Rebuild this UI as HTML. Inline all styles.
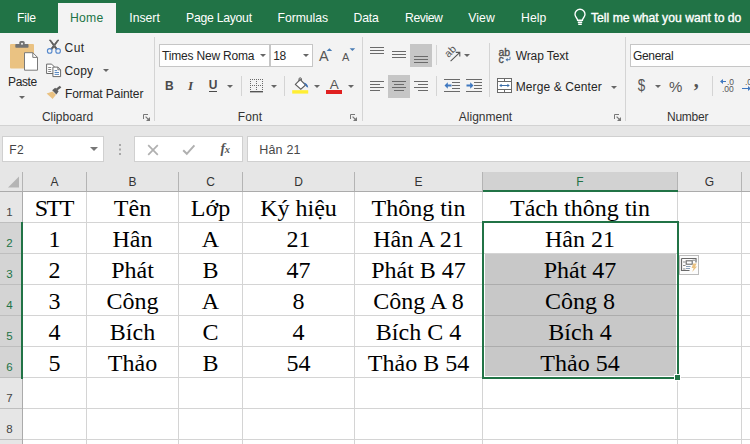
<!DOCTYPE html>
<html><head><meta charset="utf-8">
<style>
html,body{margin:0;padding:0;}
body{width:750px;height:444px;overflow:hidden;position:relative;background:#e6e6e6;font-family:"Liberation Sans",sans-serif;font-size:12px;color:#262626;}
.abs{position:absolute;}
svg{position:absolute;overflow:visible;}
.t{position:absolute;white-space:nowrap;line-height:14px;font-size:11.5px;color:#262626;}
#tabs{left:0;top:0;width:750px;height:33px;background:#217346;}
#home{left:58px;top:3px;width:58px;height:30px;background:#f3f3f3;}
#ribbon{left:0;top:33px;width:750px;height:92px;background:#f3f3f3;border-bottom:1px solid #d2d2d2;}
.sep{position:absolute;width:1px;background:#d4d4d4;}
.box{position:absolute;background:#fff;border:1px solid #c6c6c6;box-sizing:border-box;}
.sel{position:absolute;background:#c6c6c6;}
.arr{position:absolute;width:0;height:0;border-left:3px solid transparent;border-right:3px solid transparent;border-top:3px solid #666;}
#grid{left:23px;top:192px;width:727px;height:253px;background:#fff;}
.cell{position:absolute;font-family:"Liberation Serif",serif;font-size:24px;line-height:31px;height:31px;text-align:center;color:#000;white-space:nowrap;}
.vl{position:absolute;width:1px;background:#d4d4d4;}
.hl{position:absolute;height:1px;background:#d4d4d4;}
.ch{position:absolute;top:173px;height:19px;line-height:19px;text-align:center;font-size:12px;color:#333;}
.rh{position:absolute;left:0;width:19px;text-align:center;font-size:11.5px;color:#444;line-height:14px;height:14px;}
</style></head><body>
<div id="tabs" class="abs"><div id="home" class="abs"></div></div>
<div id="ribbon" class="abs"></div>
<div class="sep" style="left:154px;top:37px;height:84px"></div>
<div class="sep" style="left:362px;top:37px;height:84px"></div>
<div class="sep" style="left:625px;top:37px;height:84px"></div>
<div class="box" style="left:159px;top:44px;width:111px;height:23px"></div>
<div class="box" style="left:270px;top:44px;width:43px;height:23px"></div>
<div class="box" style="left:630px;top:44px;width:130px;height:23px"></div>
<div class="sel" style="left:410px;top:44px;width:22px;height:23px"></div>
<div class="sel" style="left:388px;top:75px;width:22px;height:23px"></div>
<div class="sep" style="left:241px;top:76px;height:20px"></div>
<div class="sep" style="left:284px;top:76px;height:20px"></div>
<div class="sep" style="left:436px;top:45px;height:20px"></div>
<div class="sep" style="left:436px;top:76px;height:20px"></div>
<div class="sep" style="left:489px;top:43px;height:54px"></div>
<div class="sep" style="left:712px;top:76px;height:20px"></div>
<div class="box" style="left:2px;top:136px;width:102px;height:26px;border-color:#d0d0d0"></div>
<div class="box" style="left:134px;top:136px;width:109px;height:26px;border-color:#d0d0d0"></div>
<div class="box" style="left:247px;top:136px;width:510px;height:26px;border-color:#d0d0d0"></div>
<div id="grid" class="abs"></div>

<div id="texts">
<span class="t" style="left:17.0px;top:10.9px;font-size:12.2px;color:#fff;letter-spacing:-0.22px;">File</span>
<span class="t" style="left:70.0px;top:10.9px;font-size:12.2px;color:#217346;letter-spacing:0.24px;">Home</span>
<span class="t" style="left:129.3px;top:10.9px;font-size:12.2px;color:#fff;letter-spacing:-0.00px;">Insert</span>
<span class="t" style="left:186.0px;top:10.9px;font-size:12.2px;color:#fff;letter-spacing:-0.24px;">Page Layout</span>
<span class="t" style="left:277.6px;top:10.9px;font-size:12.2px;color:#fff;letter-spacing:-0.04px;">Formulas</span>
<span class="t" style="left:353.6px;top:10.9px;font-size:12.2px;color:#fff;letter-spacing:-0.22px;">Data</span>
<span class="t" style="left:405.0px;top:10.9px;font-size:12.2px;color:#fff;letter-spacing:-0.42px;">Review</span>
<span class="t" style="left:468.3px;top:10.9px;font-size:12.2px;color:#fff;letter-spacing:0.07px;">View</span>
<span class="t" style="left:521.0px;top:10.9px;font-size:12.2px;color:#fff;letter-spacing:0.10px;">Help</span>
<span class="t" style="left:591.0px;top:10.9px;font-size:12.2px;color:#fff;letter-spacing:0.00px;-webkit-text-stroke:0.35px #fff;">Tell me what you want to do</span>
<span class="t" style="left:8.1px;top:74.8px;font-size:12px;color:#262626;letter-spacing:-0.41px;">Paste</span>
<span class="t" style="left:64.5px;top:41.3px;font-size:12px;color:#262626;letter-spacing:0.48px;">Cut</span>
<span class="t" style="left:64.5px;top:64.4px;font-size:12px;color:#262626;letter-spacing:0.16px;">Copy</span>
<span class="t" style="left:65.0px;top:87.1px;font-size:12px;color:#262626;letter-spacing:-0.07px;">Format Painter</span>
<span class="t" style="left:41.9px;top:110.0px;font-size:12px;color:#333;letter-spacing:-0.01px;">Clipboard</span>
<span class="t" style="left:162.1px;top:49.3px;font-size:12px;color:#262626;letter-spacing:-0.19px;">Times New Roma</span>
<span class="t" style="left:273.3px;top:49.3px;font-size:12px;color:#262626;letter-spacing:-0.36px;">18</span>
<span class="t" style="left:237.7px;top:109.7px;font-size:12px;color:#333;letter-spacing:0.11px;">Font</span>
<span class="t" style="left:515.7px;top:49.1px;font-size:12px;color:#262626;letter-spacing:-0.10px;">Wrap Text</span>
<span class="t" style="left:515.7px;top:79.9px;font-size:12px;color:#262626;letter-spacing:0.10px;">Merge &amp; Center</span>
<span class="t" style="left:458.8px;top:109.7px;font-size:12px;color:#333;letter-spacing:-0.00px;">Alignment</span>
<span class="t" style="left:633.1px;top:48.9px;font-size:12px;color:#262626;letter-spacing:-0.37px;">General</span>
<span class="t" style="left:667.0px;top:109.5px;font-size:12px;color:#333;letter-spacing:-0.26px;">Number</span>
<span class="t" style="left:9.3px;top:143.2px;font-size:12px;color:#444;letter-spacing:0.31px;">F2</span>
<span class="t" style="left:259.2px;top:143.1px;font-size:12.5px;color:#484848;letter-spacing:0.20px;">Hân 21</span>
</div>
<div id="icons">
<!-- paste -->
<svg style="left:4px;top:36px" width="40" height="40" viewBox="0 0 40 40">
<rect x="6" y="8" width="24" height="24.5" rx="1" fill="#eac282"/>
<rect x="11.3" y="8" width="13.2" height="3.8" rx="0.8" fill="#737373"/>
<rect x="15.3" y="5" width="5.4" height="5" rx="1.6" fill="#737373"/>
<circle cx="18" cy="7.7" r="1" fill="#f3f3f3"/>
<path d="M20.5 16.7h8.3l4.7 4.7v12.8h-13z" fill="#fff" stroke="#7a7a7a" stroke-width="1"/>
<path d="M28.8 16.7v4.7h4.7" fill="none" stroke="#7a7a7a" stroke-width="1"/>
</svg>
<div class="arr" style="left:18.5px;top:96px"></div>
<!-- scissors -->
<svg style="left:44px;top:38px" width="20" height="18" viewBox="0 0 20 18">
<path d="M5.4 2L6.6 2L13.4 10.8L12 11.4zM14.8 2L13.6 2L6.8 10.8L8.200 11.4z" fill="#5a5a5a" stroke="#5a5a5a" stroke-width="0.8" stroke-linejoin="round"/>
<circle cx="5.7" cy="12.9" r="2.3" fill="none" stroke="#5588cc" stroke-width="1.1"/>
<circle cx="14.1" cy="12.9" r="2.3" fill="none" stroke="#5588cc" stroke-width="1.1"/>
</svg>
<!-- copy -->
<svg style="left:44px;top:61px" width="20" height="18" viewBox="0 0 20 18">
<path d="M2.6 3.1h5l2.4 2.4v7h-7.4z" fill="#fff" stroke="#6a6a6a" stroke-width="1"/>
<path d="M4.2 6.5h3M4.2 8.5h3M4.2 10.5h3" stroke="#7a7a7a" stroke-width="0.9"/>
<path d="M8.9 6.1h5l2.7 2.7v6.8h-7.7z" fill="#fff" stroke="#6a6a6a" stroke-width="1"/>
<path d="M13.9 6.1v2.7h2.7" fill="none" stroke="#6a6a6a" stroke-width="0.9"/>
<path d="M10.6 9.6h2.5M10.6 11.5h4.4M10.6 13.4h4.4" stroke="#4a7ebb" stroke-width="0.9"/>
</svg>
<div class="arr" style="left:102.5px;top:69px"></div>
<!-- format painter -->
<svg style="left:44px;top:84px" width="20" height="18" viewBox="0 0 20 18">
<path d="M2.6 9.6L8.6 7.4L12 10.8L8.6 14.9L6.8 13.2z" fill="#eac282"/>
<path d="M8.2 6.2L11.2 3.8L14.6 7.2L12.4 10.4z" fill="#5e5e5e"/>
<path d="M12.6 5.6L16.6 2.6" stroke="#5e5e5e" stroke-width="2.4" stroke-linecap="butt"/>
</svg>
<!-- launchers -->
<svg style="left:143px;top:114px" width="8" height="8" viewBox="0 0 8 8"><path d="M0.5 5V0.5H5" fill="none" stroke="#777" stroke-width="1"/><path d="M2.6 2.6L6 6" stroke="#777" stroke-width="1.1"/><path d="M7 3v4h-4z" fill="#777"/></svg>
<svg style="left:350px;top:114px" width="8" height="8" viewBox="0 0 8 8"><path d="M0.5 5V0.5H5" fill="none" stroke="#777" stroke-width="1"/><path d="M2.6 2.6L6 6" stroke="#777" stroke-width="1.1"/><path d="M7 3v4h-4z" fill="#777"/></svg>
<svg style="left:614px;top:114px" width="8" height="8" viewBox="0 0 8 8"><path d="M0.5 5V0.5H5" fill="none" stroke="#777" stroke-width="1"/><path d="M2.6 2.6L6 6" stroke="#777" stroke-width="1.1"/><path d="M7 3v4h-4z" fill="#777"/></svg>
<!-- font group -->
<div class="arr" style="left:259.5px;top:54px"></div>
<div class="arr" style="left:302.5px;top:54px"></div>
<span class="t" style="left:319px;top:48px;font-size:14.5px;line-height:16px;color:#555">A</span>
<svg style="left:326px;top:46px" width="7" height="5"><path d="M0.6 4.9L3.4 2.2L6.2 4.9z" fill="#4a7db5"/></svg>
<span class="t" style="left:342px;top:50px;font-size:11px;line-height:14px;color:#555">A</span>
<svg style="left:348.5px;top:46px" width="7" height="5"><path d="M0.6 2.3L3.4 5L6.2 2.3z" fill="#4a7db5"/></svg>
<span class="t" style="left:165px;top:79px;font-size:12px;font-weight:bold;color:#4a4a4a">B</span>
<span class="t" style="left:188px;top:77.9px;font-size:13px;line-height:15px;font-style:italic;font-family:'Liberation Serif',serif;font-weight:bold;color:#4a4a4a">I</span>
<span class="t" style="left:208.8px;top:79.3px;font-size:12px;font-weight:bold;color:#4a4a4a;line-height:13px;height:12px;border-bottom:1.3px solid #4a4a4a">U</span>
<div class="arr" style="left:227px;top:85px"></div>
<svg style="left:250px;top:79px" width="13" height="13" viewBox="0 0 13 13"><path d="M0 0.5h13M0 6.5h13M0.5 0v13M6.5 0v13M12.5 0v13" fill="none" stroke="#6a6a6a" stroke-width="1" stroke-dasharray="1 1"/><path d="M0 12.700h13" stroke="#555" stroke-width="1.400"/></svg>
<div class="arr" style="left:270.5px;top:85px"></div>
<!-- fill color -->
<svg style="left:291px;top:76px" width="20" height="19" viewBox="0 0 20 19">
<path d="M4.400 8.400L9.200 3.600L14.600 9L9.800 13.200z" fill="#fff" stroke="#5e5e5e" stroke-width="1.100"/>
<path d="M8 5.200V3a1.200 1.200 0 0 1 2.400 0V4.600" fill="none" stroke="#5e5e5e" stroke-width="1"/>
<path d="M12.400 6.400c2.600 0.200 4.600 2 4.800 5.200c-1.800-0.200-2.600-1.400-2.800-2.800z" fill="#3b6fb5"/>
<rect x="1.200" y="14.200" width="16" height="3.400" fill="#ffee33"/>
</svg>
<div class="arr" style="left:313.5px;top:85px"></div>
<!-- font color -->
<span class="t" style="left:329.8px;top:76.8px;font-size:13.5px;line-height:16px;color:#555">A</span>
<div class="abs" style="left:326px;top:90px;width:16px;height:3.5px;background:#e02020"></div>
<div class="arr" style="left:347.5px;top:85px"></div>
<!-- alignment -->
<svg style="left:370px;top:44px" width="120" height="56" viewBox="0 0 120 56" shape-rendering="crispEdges">
<g stroke="#6a6a6a" stroke-width="1" fill="none">
<path d="M0 3.5h14M0 6.5h14M0 9.5h14"/>
<path d="M22 7.5h14M22 10.5h14M22 13.5h14"/>
<path d="M44 12.5h14M44 15.5h14M44 18.5h14"/>
<path d="M0 37.5h14M0 40.5h10M0 43.5h14M0 46.5h10"/>
<path d="M22 37.5h14M24 40.5h10M22 43.5h14M24 46.5h10"/>
<path d="M44 37.5h14M48 40.5h10M44 43.5h14M48 46.5h10"/>
<path d="M74 35.5h16M82 38.5h8M82 41.5h8M82 44.5h8M74 47.5h16"/>
<path d="M96 35.5h16M104 38.5h8M104 41.5h8M104 44.5h8M96 47.5h16"/>
</g>
</svg>
<svg style="left:444px;top:78px" width="40" height="16" viewBox="0 0 40 16">
<path d="M0.5 7.5L3.8 4.3V6.6H7.5V8.4H3.8V10.7z" fill="#3f78c0"/>
<path d="M29.5 7.5L26.2 4.3V6.6H22.5V8.4H26.2V10.7z" fill="#3f78c0"/>
</svg>
<!-- orientation -->
<svg style="left:442px;top:44px" width="22" height="22" viewBox="0 0 22 22">
<text x="0" y="0" transform="translate(6.5 14) rotate(-45)" font-family="Liberation Sans, sans-serif" font-size="10.5" fill="#555">ab</text>
<path d="M8.6 17.2L17.6 8.6M13.8 8.4H17.8V12.4" stroke="#555" stroke-width="1.1" fill="none"/>
</svg>
<div class="arr" style="left:463.5px;top:54px"></div>
<!-- wrap text -->
<span class="t" style="left:498.5px;top:45.5px;font-size:10.5px;line-height:12px;color:#505050;-webkit-text-stroke:0.35px #505050">ab</span>
<span class="t" style="left:498.5px;top:52.5px;font-size:10.5px;line-height:12px;color:#505050;-webkit-text-stroke:0.35px #505050">c</span>
<svg style="left:505px;top:56px" width="7" height="7" viewBox="0 0 7 7"><path d="M5 0.800v2.900H2" fill="none" stroke="#3c6ea8" stroke-width="0.900"/><path d="M0.500 3.700L2.600 2V5.400z" fill="#3c6ea8"/></svg>
<!-- merge -->
<svg style="left:497px;top:78px" width="16" height="16" viewBox="0 0 16 16">
<rect x="0.5" y="0.5" width="14" height="14" fill="#fff" stroke="#6a6a6a"/>
<path d="M0.5 3.5h14M0.5 11.5h14M7.5 0.5v3M7.5 11.5v3" stroke="#6a6a6a" fill="none"/>
<path d="M3.5 7.5h8" stroke="#3c6ea8" stroke-width="1"/>
<path d="M2.2 7.5L4.600 5.700V9.300zM12.800 7.500L10.400 5.700V9.300z" fill="#3c6ea8"/>
</svg>
<div class="arr" style="left:610.5px;top:85.5px"></div>
<!-- number -->
<span class="t" style="left:637.2px;top:76.3px;font-size:16px;line-height:20px;color:#555;transform:scaleX(0.84);transform-origin:50% 50%">$</span>
<div class="arr" style="left:654.5px;top:85px"></div>
<span class="t" style="left:669px;top:77.5px;font-size:15px;line-height:18px;color:#555;letter-spacing:-0.5px">%</span>
<span class="t" style="left:693.8px;top:67.5px;font-size:20px;line-height:24px;color:#555;font-family:'Liberation Serif',serif;font-weight:bold">,</span>
<svg style="left:719px;top:78px" width="34" height="16" viewBox="0 0 34 16">
<path d="M1 3.5L4 1V2.9H7V4.1H4V6z" fill="#3f78c0"/>
<path d="M32 10.5L29 8V9.9H23V11.1H29V13z" fill="#3f78c0"/>
<text x="8" y="7" font-family="Liberation Sans, sans-serif" font-size="8.5" fill="#555">.0</text>
<text x="3" y="14.3" font-family="Liberation Sans, sans-serif" font-size="8.5" fill="#555">.00</text>
<text x="26" y="7" font-family="Liberation Sans, sans-serif" font-size="8.5" fill="#555">.00</text>
</svg>
<!-- lightbulb -->
<svg style="left:572px;top:8px" width="16" height="18" viewBox="0 0 16 18">
<path d="M5.6 12.2C5.6 10.4 3 9.2 3 6.2a5 5 0 0 1 10 0c0 3-2.600 4.200-2.600 6z" fill="none" stroke="#fff" stroke-width="1.35"/>
<path d="M5.800 14.200h4.400M6.200 16.200h3.600" stroke="#fff" stroke-width="1.35" fill="none"/>
</svg>
<!-- formula bar -->
<div class="arr" style="left:89.5px;top:146.5px;border-left-width:4px;border-right-width:4px;border-top-width:4px;border-top-color:#777"></div>
<div class="abs" style="left:119px;top:144px;width:1.5px;height:1.5px;background:#a8a8a8;box-shadow:0 4.5px 0 #a8a8a8,0 9px 0 #a8a8a8"></div>
<svg style="left:147px;top:144px" width="12" height="12" viewBox="0 0 12 12"><path d="M1.200 1.200L10.800 10.800M10.800 1.200L1.200 10.800" stroke="#b0b0b0" stroke-width="1.7" fill="none"/></svg>
<svg style="left:182px;top:144px" width="14" height="12" viewBox="0 0 14 12"><path d="M1.200 6.200L4.800 9.800L12.400 1.400" stroke="#b0b0b0" stroke-width="2" fill="none"/></svg>
<span class="t" style="left:220.5px;top:141px;font-size:14px;line-height:16px;color:#555;font-family:'Liberation Serif',serif;font-style:italic;letter-spacing:-0.5px"><b>f</b><span style="font-size:10.5px;font-weight:bold">x</span></span>
<!-- quick analysis -->
<div class="abs" style="left:679px;top:255px;width:18px;height:18px;background:#fcfcfc;border:1px solid #bcbcbc;box-sizing:content-box"></div>
<svg style="left:681px;top:257px" width="18" height="17" viewBox="0 0 18 17">
<path d="M0.500 1.500h14.500v4M0.500 1.500v12h8" fill="none" stroke="#6a6a6a" stroke-width="1.200"/>
<path d="M2 5h2.500M2 8.500h2.500M2 12h2.500M11.500 3.200h2.500" stroke="#8a8a8a" stroke-width="1" fill="none"/>
<rect x="5.200" y="3.800" width="6" height="3.400" fill="#fff" stroke="#6a6a6a" stroke-width="1.100"/>
<path d="M5 9.500h4.500M5 11.500h4" stroke="#8aa0b8" stroke-width="1.200"/>
<path d="M12.200 6.500h3.600l-1.800 3h2l-4.800 5.500l1.400-4h-2z" fill="#eac282"/>
</svg>

</div>
<div id="gridcontent">
<div class="abs" style="left:485px;top:254px;width:191px;height:122px;background:#c8c8c8"></div>
<div class="abs" style="left:483px;top:172px;width:194px;height:19px;background:#d2d2d2"></div>
<div class="abs" style="left:0;top:223px;width:22px;height:155px;background:#d4d4d4"></div>
<div class="vl" style="left:22px;top:172px;height:272px"></div>
<div class="vl" style="left:86px;top:172px;height:272px"></div>
<div class="vl" style="left:178px;top:172px;height:272px"></div>
<div class="vl" style="left:242px;top:172px;height:272px"></div>
<div class="vl" style="left:354px;top:172px;height:272px"></div>
<div class="vl" style="left:482px;top:172px;height:272px"></div>
<div class="vl" style="left:677px;top:172px;height:272px"></div>
<div class="vl" style="left:741px;top:172px;height:272px"></div>
<div class="hl" style="left:0;top:191px;width:750px"></div>
<div class="hl" style="left:0;top:222px;width:750px"></div>
<div class="hl" style="left:0;top:253px;width:750px"></div>
<div class="hl" style="left:0;top:284px;width:750px"></div>
<div class="hl" style="left:0;top:315px;width:750px"></div>
<div class="hl" style="left:0;top:346px;width:750px"></div>
<div class="hl" style="left:0;top:377px;width:750px"></div>
<div class="hl" style="left:0;top:408px;width:750px"></div>
<div class="hl" style="left:0;top:439px;width:750px"></div>
<div class="hl" style="left:0;top:222px;width:22px;background:#bebebe"></div>
<div class="hl" style="left:0;top:253px;width:22px;background:#bebebe"></div>
<div class="hl" style="left:0;top:284px;width:22px;background:#bebebe"></div>
<div class="hl" style="left:0;top:315px;width:22px;background:#bebebe"></div>
<div class="hl" style="left:0;top:346px;width:22px;background:#bebebe"></div>
<div class="hl" style="left:0;top:377px;width:22px;background:#bebebe"></div>
<div class="hl" style="left:0;top:408px;width:22px;background:#bebebe"></div>
<div class="hl" style="left:0;top:439px;width:22px;background:#bebebe"></div>
<div class="hl" style="left:485px;top:284px;width:191px;background:#acacac"></div>
<div class="hl" style="left:485px;top:315px;width:191px;background:#acacac"></div>
<div class="hl" style="left:485px;top:346px;width:191px;background:#acacac"></div>
<div class="vl" style="left:22px;top:172px;height:19px;background:#b4b4b4"></div>
<div class="vl" style="left:86px;top:172px;height:19px;background:#b4b4b4"></div>
<div class="vl" style="left:178px;top:172px;height:19px;background:#b4b4b4"></div>
<div class="vl" style="left:242px;top:172px;height:19px;background:#b4b4b4"></div>
<div class="vl" style="left:354px;top:172px;height:19px;background:#b4b4b4"></div>
<div class="vl" style="left:482px;top:172px;height:19px;background:#b4b4b4"></div>
<div class="vl" style="left:677px;top:172px;height:19px;background:#b4b4b4"></div>
<div class="vl" style="left:741px;top:172px;height:19px;background:#b4b4b4"></div>
<div class="hl" style="left:0;top:191px;width:750px;background:#ababab"></div>
<div class="vl" style="left:22px;top:191px;height:253px;background:#ababab"></div>
<div class="ch" style="left:23px;width:63px;color:#333">A</div>
<div class="ch" style="left:87px;width:91px;color:#333">B</div>
<div class="ch" style="left:179px;width:63px;color:#333">C</div>
<div class="ch" style="left:243px;width:111px;color:#333">D</div>
<div class="ch" style="left:355px;width:127px;color:#333">E</div>
<div class="ch" style="left:483px;width:194px;color:#217346">F</div>
<div class="ch" style="left:678px;width:63px;color:#333">G</div>
<div class="rh" style="top:205px;color:#444">1</div>
<div class="rh" style="top:236px;color:#217346">2</div>
<div class="rh" style="top:267px;color:#217346">3</div>
<div class="rh" style="top:298px;color:#217346">4</div>
<div class="rh" style="top:329px;color:#217346">5</div>
<div class="rh" style="top:360px;color:#217346">6</div>
<div class="rh" style="top:391px;color:#444">7</div>
<div class="rh" style="top:422px;color:#444">8</div>
<div class="cell" style="left:23px;top:193px;width:63px;letter-spacing:-1.5px;text-indent:-1.5px">STT</div>
<div class="cell" style="left:87px;top:193px;width:91px">Tên</div>
<div class="cell" style="left:179px;top:193px;width:63px">Lớp</div>
<div class="cell" style="left:243px;top:193px;width:111px">Ký hiệu</div>
<div class="cell" style="left:355px;top:193px;width:127px">Thông tin</div>
<div class="cell" style="left:483px;top:193px;width:194px">Tách thông tin</div>
<div class="cell" style="left:23px;top:224px;width:63px">1</div>
<div class="cell" style="left:87px;top:224px;width:91px">Hân</div>
<div class="cell" style="left:179px;top:224px;width:63px">A</div>
<div class="cell" style="left:243px;top:224px;width:111px">21</div>
<div class="cell" style="left:355px;top:224px;width:127px">Hân A 21</div>
<div class="cell" style="left:483px;top:224px;width:194px">Hân 21</div>
<div class="cell" style="left:23px;top:255px;width:63px">2</div>
<div class="cell" style="left:87px;top:255px;width:91px">Phát</div>
<div class="cell" style="left:179px;top:255px;width:63px">B</div>
<div class="cell" style="left:243px;top:255px;width:111px">47</div>
<div class="cell" style="left:355px;top:255px;width:127px">Phát B 47</div>
<div class="cell" style="left:483px;top:255px;width:194px">Phát 47</div>
<div class="cell" style="left:23px;top:286px;width:63px">3</div>
<div class="cell" style="left:87px;top:286px;width:91px">Công</div>
<div class="cell" style="left:179px;top:286px;width:63px">A</div>
<div class="cell" style="left:243px;top:286px;width:111px">8</div>
<div class="cell" style="left:355px;top:286px;width:127px">Công A 8</div>
<div class="cell" style="left:483px;top:286px;width:194px">Công 8</div>
<div class="cell" style="left:23px;top:317px;width:63px">4</div>
<div class="cell" style="left:87px;top:317px;width:91px">Bích</div>
<div class="cell" style="left:179px;top:317px;width:63px">C</div>
<div class="cell" style="left:243px;top:317px;width:111px">4</div>
<div class="cell" style="left:355px;top:317px;width:127px">Bích C 4</div>
<div class="cell" style="left:483px;top:317px;width:194px">Bích 4</div>
<div class="cell" style="left:23px;top:348px;width:63px">5</div>
<div class="cell" style="left:87px;top:348px;width:91px">Thảo</div>
<div class="cell" style="left:179px;top:348px;width:63px">B</div>
<div class="cell" style="left:243px;top:348px;width:111px">54</div>
<div class="cell" style="left:355px;top:348px;width:127px">Thảo B 54</div>
<div class="cell" style="left:483px;top:348px;width:194px">Thảo 54</div>
<div class="abs" style="left:483px;top:190px;width:195px;height:2px;background:#217346"></div>
<div class="abs" style="left:21px;top:222px;width:2px;height:157px;background:#217346"></div>
<div class="abs" style="left:482px;top:221px;width:193px;height:154px;border:2px solid #217346"></div>
<div class="abs" style="left:674px;top:374px;width:5px;height:5px;background:#217346;border:1px solid #fff"></div>
<svg class="abs" style="left:0;top:172px" width="22" height="19"><polygon points="19,4.5 19,15.5 8,15.5" fill="#b5b5b5"/></svg>
</div>
</body></html>
